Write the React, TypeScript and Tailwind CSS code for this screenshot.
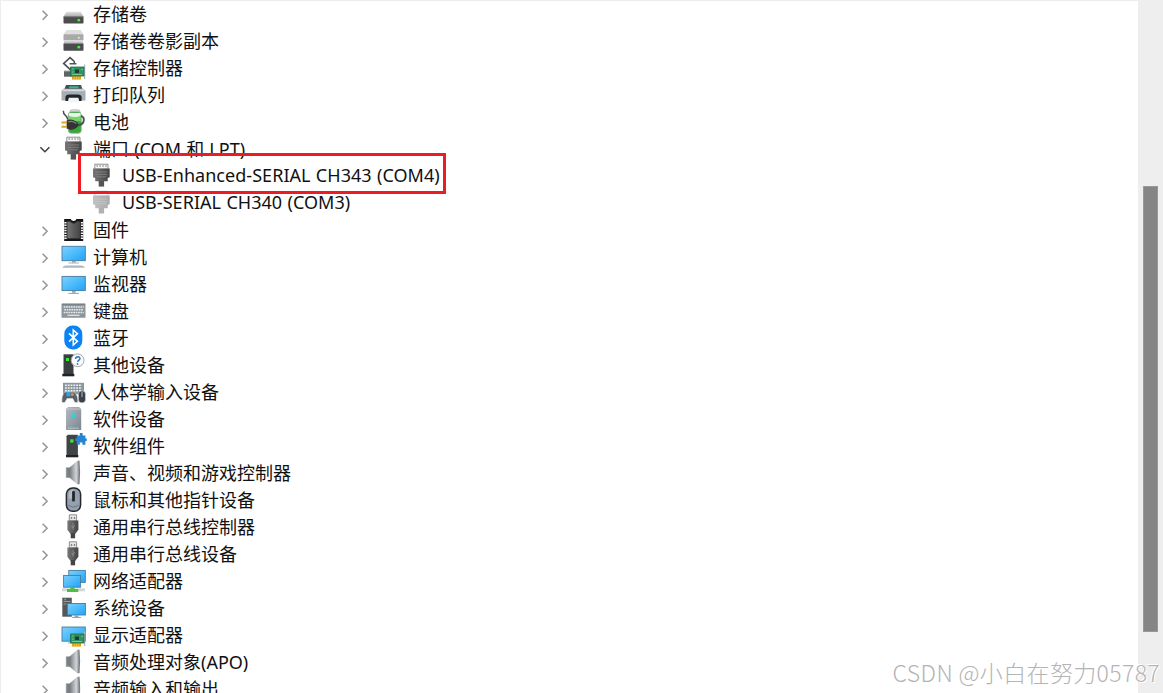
import type { ReactNode } from "react";

type IconName =
  | "volume"
  | "shadowCopy"
  | "storage"
  | "printer"
  | "battery"
  | "port"
  | "portGhost"
  | "firmware"
  | "computer"
  | "monitor"
  | "keyboard"
  | "bluetooth"
  | "other"
  | "hid"
  | "softDevice"
  | "softComponent"
  | "speaker"
  | "mouse"
  | "usb"
  | "network"
  | "system"
  | "display";

interface Device {
  label: string;
  icon: IconName;
  open?: boolean;
  child?: boolean;
}

const DEVICES: Device[] = [
  { label: "存储卷", icon: "volume" },
  { label: "存储卷卷影副本", icon: "shadowCopy" },
  { label: "存储控制器", icon: "storage" },
  { label: "打印队列", icon: "printer" },
  { label: "电池", icon: "battery" },
  { label: "端口 (COM 和 LPT)", icon: "port", open: true },
  { label: "USB-Enhanced-SERIAL CH343 (COM4)", icon: "port", child: true },
  { label: "USB-SERIAL CH340 (COM3)", icon: "portGhost", child: true },
  { label: "固件", icon: "firmware" },
  { label: "计算机", icon: "computer" },
  { label: "监视器", icon: "monitor" },
  { label: "键盘", icon: "keyboard" },
  { label: "蓝牙", icon: "bluetooth" },
  { label: "其他设备", icon: "other" },
  { label: "人体学输入设备", icon: "hid" },
  { label: "软件设备", icon: "softDevice" },
  { label: "软件组件", icon: "softComponent" },
  { label: "声音、视频和游戏控制器", icon: "speaker" },
  { label: "鼠标和其他指针设备", icon: "mouse" },
  { label: "通用串行总线控制器", icon: "usb" },
  { label: "通用串行总线设备", icon: "usb" },
  { label: "网络适配器", icon: "network" },
  { label: "系统设备", icon: "system" },
  { label: "显示适配器", icon: "display" },
  { label: "音频处理对象(APO)", icon: "speaker" },
  { label: "音频输入和输出", icon: "speaker" },
];

// Gradients shared by every device icon
function Gradients() {
  return (
    <svg className="absolute h-0 w-0" aria-hidden="true">
      <defs>
        <linearGradient id="screen" x1="0" y1="0" x2="1" y2="1">
          <stop offset="0" stopColor="#7fd0fb" />
          <stop offset="0.5" stopColor="#4dbcfb" />
          <stop offset="1" stopColor="#1fa2f8" />
        </linearGradient>
        <linearGradient id="drive" x1="0" y1="0" x2="0" y2="1">
          <stop offset="0" stopColor="#e4e4e4" />
          <stop offset="1" stopColor="#a9a9a9" />
        </linearGradient>
        <linearGradient id="dark" x1="0" y1="0" x2="1" y2="0">
          <stop offset="0" stopColor="#777" />
          <stop offset="0.5" stopColor="#5c5c5c" />
          <stop offset="1" stopColor="#454545" />
        </linearGradient>
        <linearGradient id="steel" x1="0" y1="0" x2="1" y2="1">
          <stop offset="0" stopColor="#b3bbc1" />
          <stop offset="1" stopColor="#7b868e" />
        </linearGradient>
        <linearGradient id="cone" x1="0" y1="0" x2="1" y2="0">
          <stop offset="0" stopColor="#75797d" />
          <stop offset="0.35" stopColor="#a4a8ac" />
          <stop offset="0.7" stopColor="#d2d5d7" />
          <stop offset="1" stopColor="#85898d" />
        </linearGradient>
      </defs>
    </svg>
  );
}

function Board() {
  return (
    <>
      <path d="M24.6 9.5v14.5" stroke="#aeb4b8" strokeWidth="1.3" />
      <path d="M12 21h9v3.6h-9z" fill="#e9a20c" />
      <path d="M14.3 21v3.6M16.5 21v3.6M18.7 21v3.6" stroke="#f7cb55" strokeWidth="0.6" />
      <path d="M10.5 12h13.5v9H10.5z" fill="#2f9461" stroke="#1d6e49" strokeWidth="0.8" />
      <path d="M15 14.5h4v3.5h-4z" fill="#1f3b33" />
      <path d="M12 14h1.5M12 17h1.5M21.5 14.5h1.5M12 19.5h10" stroke="#8bd3a6" strokeWidth="0.8" />
    </>
  );
}

const ICONS: Record<IconName, ReactNode> = {
  volume: (
    <>
      <path d="M6.3 10.7h14.5l2.7 5H3.5z" fill="url(#drive)" />
      <rect x="3.5" y="15.3" width="20" height="7.2" rx="0.8" fill="#4c4c4c" />
      <path d="M3.5 15.7h20" stroke="#8b8b8b" strokeWidth="0.8" />
      <circle cx="18.8" cy="19.2" r="1.4" fill="#3cf03c" />
    </>
  ),
  shadowCopy: (
    <>
      <path d="M6.3 2h14.5l2.7 4.5H3.5z" fill="#dedede" />
      <rect x="3.5" y="6.3" width="20" height="6.2" rx="0.6" fill="#a9a9a9" />
      <circle cx="18.8" cy="9.8" r="1" fill="#d6eed6" />
      <path d="M4.5 12.5h18l1 3.2h-20z" fill="url(#drive)" />
      <rect x="3.5" y="15.5" width="20" height="7.2" rx="0.8" fill="#4c4c4c" />
      <circle cx="18.8" cy="19.2" r="1.4" fill="#3cf03c" />
    </>
  ),
  storage: (
    <>
      <path d="M4 16h9v5.7H4z" fill="#606366" />
      <path d="M4 16h8" stroke="#a5a8aa" />
      <path d="M14 6.2 10 2.6 3.7 8.5l6.3 5.8 2.2-2" fill="none" stroke="#505355" strokeWidth="1.7" />
      <path d="M9.6 8.8h6.8M14.3 6v2.8" fill="none" stroke="#505355" strokeWidth="1.5" />
      <Board />
    </>
  ),
  printer: (
    <>
      <path d="M6 3h15l1.8 5H4z" fill="#4a4f54" />
      <path d="M9.5 4.2h8.7l.6 2H9z" fill="#35b88b" />
      <path d="M3.5 6.8h19.8l2.2 2v9.7h-24V8.8z" fill="#a5adb5" />
      <path d="M2.5 8.3h22" stroke="#d6dce1" strokeWidth="1.8" />
      <path d="M5.4 19v-3.6q0-3 3.8-3h8.6q3.8 0 3.8 3V19z" fill="#24272a" />
      <path d="M8.8 15.8h9.6l1 4.4H7.8z" fill="#f1f3f5" />
    </>
  ),
  battery: (
    <>
      <rect x="10" y="0.8" width="10" height="4" rx="2" fill="#dedede" stroke="#9c9c9c" strokeWidth="0.6" />
      <rect x="8.3" y="2.8" width="13" height="21.5" rx="3" fill="#36a83a" stroke="#a4b5a3" strokeWidth="0.9" />
      <path d="M9 4h11.6v3.6q-5.8 1.8-11.6 0z" fill="#e5f4e3" />
      <path d="M9 7q5.8 1.8 11.6 0v5H9z" fill="#6fd866" />
      <path d="M3.3 1.8c-.2 5.6 4.2 3.4 4.4 9" fill="none" stroke="#4d4d4d" strokeWidth="1.5" />
      <path d="M21 6.8q3.5 1.2 2.7 5.2-.8 3.6-5.7 4.3" fill="none" stroke="#505050" strokeWidth="1.9" />
      <path d="M6.6 11.6q3-1.6 6.4-.6 4 1 5.8 4.7-1.8 3.8-5.8 4.7-3.4.8-6.4-.8z" fill="#343434" />
      <path d="M8.3 12.8q5.5-1.5 8 1.8" fill="none" stroke="#858585" strokeWidth="1.2" />
      <path d="M1.5 13.5h5.3M1.5 17.8h5.3" stroke="#d9a722" strokeWidth="2" />
    </>
  ),
  port: (
    <>
      <path d="M6.8 1.2h13.2v5H6.8z" fill="#f6f6f6" stroke="#777" strokeWidth="0.8" />
      <path d="M8.6 3h10" stroke="#555" strokeWidth="1.1" strokeDasharray="1.3 1.6" />
      <path d="M5 5.6h16.7v8.6l-2 .8v3.3H7.2V15L5 14.2z" fill="url(#dark)" />
      <path d="M7.5 9h11.7M7.5 11.4h11.7M8.5 13.8h9.8" stroke="#8d8d8d" strokeWidth="0.7" />
      <path d="M10.7 18h5.4v5.6h-5.4z" fill="#555" />
    </>
  ),
  portGhost: null,
  firmware: (
    <>
      <path d="M4.2 2h6.6q.5 2 2.8 2t2.8-2h6.8v22h-19z" fill="#151515" />
      <path d="M5.6 5v17M21.9 5v17" stroke="#f6f6f6" strokeWidth="2.6" strokeDasharray="1.5 1.1" />
      <path d="M7 4.2h3.4q1 2 3.3 2t3.3-2h3.4v17.5H7z" fill="url(#dark)" stroke="#2b2b2b" strokeWidth="0.8" />
    </>
  ),
  computer: (
    <>
      <rect x="2" y="2.3" width="23.3" height="14.4" fill="url(#screen)" stroke="#477b9e" strokeWidth="0.9" />
      <path d="M12 17h3.7v1.7H12z" fill="#9aabb7" />
      <path d="M8.5 19h10.4" stroke="#a4b3bd" />
      <path d="M2.3 23.8q1-2.2 4-2.2h14.6q3 0 4 2.2z" fill="#a9bac5" />
    </>
  ),
  monitor: (
    <>
      <rect x="2" y="5.4" width="23.3" height="14.2" fill="url(#screen)" stroke="#477b9e" strokeWidth="0.9" />
      <path d="M12 20h3.7v1.8H12z" fill="#9aabb7" />
      <path d="M8.3 22.4h10.6" stroke="#8fa1ad" />
    </>
  ),
  keyboard: (
    <>
      <rect x="1.5" y="5.5" width="24" height="14.3" rx="0.6" fill="#8d969c" />
      <path d="M2 6.3h23" stroke="#747d83" />
      <path d="M3.7 9h20M4.3 11.8h19M3.7 14.5h20" stroke="#e9ecee" strokeWidth="1.5" strokeDasharray="1.7 0.7" />
      <path d="M7.5 17.3h12" stroke="#e1e5e7" strokeWidth="1.3" />
    </>
  ),
  bluetooth: (
    <>
      <rect x="4.3" y="0.5" width="18" height="24" rx="8.4" fill="#0a83f5" />
      <path d="m9 8.4 8.4 7.9-4.1 3.7V5l4.1 3.7L9 16.6" fill="none" stroke="#fff" strokeWidth="1.6" />
    </>
  ),
  other: (
    <>
      <path d="M3.5 2.3h10v20h-10z" fill="#3b3f41" />
      <path d="M2.3 21.8h12v2.5h-12z" fill="#202426" />
      <path d="M6 6h3v3H6z" fill="#38e838" />
      <circle cx="17.6" cy="8.3" r="6.4" fill="#f8fafb" stroke="#a5a9ac" strokeWidth="1" />
      <path d="M15.5 6.9q.3-2.2 2.3-2.2 2.3.1 2.1 2-.1 1-1.2 1.7-1 .7-1 1.7" fill="none" stroke="#3575bd" strokeWidth="1.5" />
      <circle cx="17.5" cy="12" r="0.9" fill="#3575bd" />
    </>
  ),
  hid: (
    <>
      <rect x="3" y="3.8" width="21" height="11.5" fill="#8d969c" />
      <path d="M5 6.3h17M5 9h17M5 11.7h17" stroke="#f1f4f5" strokeWidth="1.4" strokeDasharray="1.8 1" />
      <path d="M2 23.5q-.8-5.8 2.3-10.4h10.2q4.3 4.6 3.2 10.4h-2.8l-2.2-4H7.1l-2.4 4z" fill="#596069" stroke="#e7eaec" strokeWidth="0.5" />
      <path d="M6.5 13h3.8v4.2H6.5z" fill="#28a9e6" />
      <circle cx="12.3" cy="15.5" r="1.5" fill="#ed8b38" />
      <rect x="18.4" y="12" width="7.1" height="11.8" rx="3.2" fill="#394049" stroke="#e7eaec" strokeWidth="0.5" />
      <path d="M22 13v5" stroke="#b5bec6" />
    </>
  ),
  softDevice: (
    <>
      <path d="m6 3 2-2h11l2.2 2v21H6z" fill="url(#steel)" />
      <path d="M6 3h15M8 22.2h11" stroke="#c5ccd0" strokeWidth="0.8" />
      <path d="M12 8.2h3v3h-3z" fill="#24d6e9" />
    </>
  ),
  softComponent: (
    <>
      <path d="m6.5 3.3 1.2-1.5h10.2v20.5H6.5z" fill="#404446" />
      <path d="M6 22h12.3v2.3H6z" fill="#202426" />
      <path d="M10.2 6.3h3.3v3.3h-3.3z" fill="#38e838" />
      <path d="M16.8 2.4h3V0h2.8v2.4h2.8v3h1.4V8h-1.4v3.8h-3V9.6h-2.6v2.2h-3V8h-1.6V5.4h1.6z" fill="#2785cf" />
    </>
  ),
  speaker: (
    <>
      <path d="M6 7.5h4v10.2H6z" fill="#7b8085" />
      <path d="M9.6 7.6 17.2.7h2v23.6h-2l-7.6-6.6z" fill="url(#cone)" />
      <path d="M18.9.8q1.4 11.2 0 23.3" fill="none" stroke="#7a7e82" strokeWidth="1.1" />
      <path d="M6.2 7.8v9.6" stroke="#b2b7bb" strokeWidth="0.7" />
    </>
  ),
  mouse: (
    <>
      <rect x="6.4" y="0.9" width="14.2" height="23.4" rx="6.2" fill="#94a0ae" stroke="#27292c" strokeWidth="1.5" />
      <path d="M8.6 8q0-5 4.7-5.6v9H8.6z" fill="#b2bdc8" />
      <rect x="12.1" y="4" width="2.8" height="10.6" rx="1" fill="#24272a" />
      <path d="M8.3 18q5 4.2 10.3 0" fill="none" stroke="#697584" />
    </>
  ),
  usb: (
    <>
      <path d="M9.3.8h7.3V7H9.3z" fill="#e7e7e7" stroke="#858585" strokeWidth="0.9" />
      <path d="M10.8 3.2h1.4v1.5h-1.4zM13.8 3.2h1.4v1.5h-1.4z" fill="#666" />
      <path d="M7.4 6.5h11v9.2l-3 4h-5l-3-4z" fill="url(#dark)" />
      <path d="M13 8.6v7.2m-1.8-4 1.8 2 1.8-2.8" fill="none" stroke="#999" strokeWidth="0.7" />
      <path d="M10.7 19h4.4v5.3h-4.4z" fill="#444" />
    </>
  ),
  network: (
    <>
      <path d="M2 20.3h23v3H2z" fill="#d3d7d7" />
      <rect x="8.8" y="2.4" width="16.5" height="12" fill="url(#screen)" stroke="#477b9e" strokeWidth="0.9" />
      <rect x="3.6" y="7.4" width="17" height="11.8" fill="url(#screen)" stroke="#477b9e" strokeWidth="0.9" />
      <path d="M10.5 19h4v2h3.8v3H7v-3h3.5z" fill="#4ac13f" />
    </>
  ),
  system: (
    <>
      <path d="M2.3 2.7h9.5v19H2.3z" fill="#54585b" />
      <path d="M3.5 6.5h7M3.5 9h3" stroke="#a9acae" strokeWidth="0.8" />
      <circle cx="5.2" cy="4.4" r="0.9" fill="#4bd64b" />
      <rect x="7.4" y="8.5" width="18" height="11.5" fill="url(#screen)" stroke="#477b9e" strokeWidth="0.9" />
      <path d="M14.5 20.3h4v1.7h2.4v1h-8.8v-1h2.4z" fill="#93a5b0" />
    </>
  ),
  display: (
    <>
      <rect x="2" y="5" width="23.3" height="14.2" fill="url(#screen)" stroke="#477b9e" strokeWidth="0.9" />
      <path d="M8 21h4" stroke="#9aabb7" />
      <Board />
    </>
  ),
};

function DeviceIcon({ name }: { name: IconName }) {
  const ghost = name === "portGhost";
  return (
    <svg viewBox="0 0 27 27" className={`h-[27px] w-[27px] shrink-0 ${ghost ? "opacity-45" : ""}`}>
      {ICONS[ghost ? "port" : name]}
    </svg>
  );
}

function Chevron({ open }: { open?: boolean }) {
  return (
    <svg viewBox="0 0 20 27" className="h-[27px] w-5 shrink-0" fill="none">
      {open ? (
        <path d="m5.4 11.3 4.5 4.5 4.5-4.5" stroke="#3f3f3f" strokeWidth="1.5" />
      ) : (
        <path d="m7.6 9.8 4.5 4.5-4.5 4.5" stroke="#949494" strokeWidth="1.5" />
      )}
    </svg>
  );
}

function DeviceRow({ device }: { device: Device }) {
  return (
    <li className={`flex h-[27px] shrink-0 items-center ${device.child ? "pl-[87px]" : "pl-[34px]"}`}>
      {!device.child && (
        <span className="mr-[5px]">
          <Chevron open={device.open} />
        </span>
      )}
      <DeviceIcon name={device.icon} />
      <span
        className={`text-[18px] leading-[27px] whitespace-nowrap ${
          device.child ? "mb-[2px] ml-[7px] tracking-[0.04px] [word-spacing:0.6px]" : "ml-1.5 [word-spacing:0.5px]"
        }`}
      >
        {device.label}
      </span>
    </li>
  );
}

export default function App() {
  return (
    <div className="relative flex h-[693px] w-[1163px] overflow-hidden border-t border-l border-[#ededed] bg-white font-['Noto_Sans','Noto_Sans_CJK_SC',sans-serif] text-[#111]">
      <Gradients />
      <ul className="flex min-w-0 flex-1 flex-col overflow-hidden">
        {DEVICES.map((device) => (
          <DeviceRow key={device.label} device={device} />
        ))}
      </ul>

      {/* Scrollbar */}
      <div className="flex w-[25px] shrink-0 flex-col items-center bg-[#eeeeee] pt-[185px]">
        <div className="h-[446px] w-[15px] border border-[#989898] bg-[#858585]" />
      </div>

      {/* Highlight around the connected serial port */}
      <div className="absolute top-[152px] left-[77px] h-[41px] w-[368px] border-3 border-[#ed1c24]" />

      <div className="absolute right-[3px] bottom-[6px] font-['Noto_Sans_CJK_SC',sans-serif] text-[23px] leading-[30px] font-light tracking-[0.37px] whitespace-nowrap text-[#b4b4b4] [text-shadow:1px_1px_0_#fff,-1px_-1px_0_#fff]">
        CSDN @小白在努力05787
      </div>
    </div>
  );
}
